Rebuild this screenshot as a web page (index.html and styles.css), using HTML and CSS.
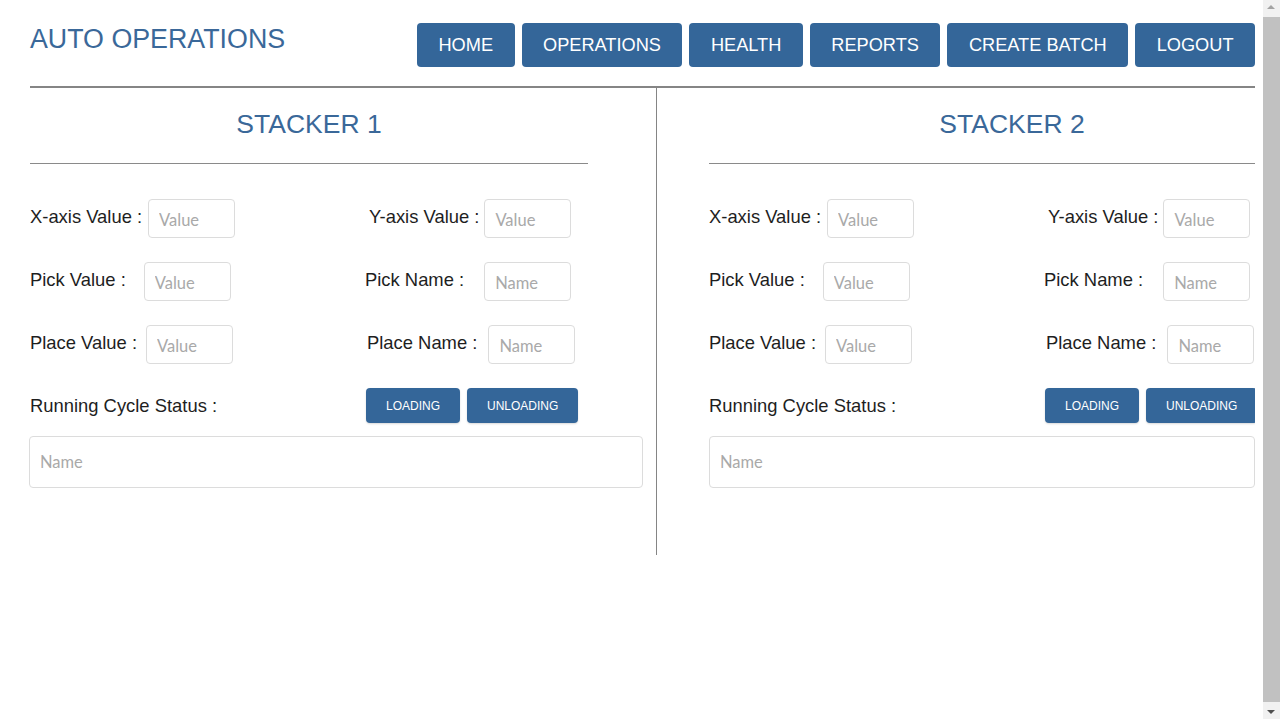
FILE: index.html
```html
<!DOCTYPE html>
<html lang="en">
<head>
<meta charset="utf-8">
<title>Auto Operations</title>
<link rel="stylesheet" href="styles.css">
</head>
<body>
<div class="page">
  <header class="topbar">
    <h1 class="brand">AUTO OPERATIONS</h1>
    <nav class="nav">
      <button class="nav-btn">HOME</button>
      <button class="nav-btn">OPERATIONS</button>
      <button class="nav-btn">HEALTH</button>
      <button class="nav-btn">REPORTS</button>
      <button class="nav-btn">CREATE BATCH</button>
      <button class="nav-btn">LOGOUT</button>
    </nav>
  </header>

  <main class="stackers">
    <section class="stacker stacker-left">
      <h2 class="stacker-title">STACKER 1</h2>
      <div class="form">
        <div class="field-row">
          <div class="field field-left">
            <label class="lbl">X-axis Value :</label>
            <input class="inp gap-s" placeholder="Value">
          </div>
          <div class="field shift-4">
            <label class="lbl">Y-axis Value :</label>
            <input class="inp gap-xs" placeholder="Value">
          </div>
        </div>
        <div class="field-row">
          <div class="field field-left">
            <label class="lbl">Pick Value :</label>
            <input class="inp gap-l" placeholder="Value">
          </div>
          <div class="field">
            <label class="lbl">Pick Name :</label>
            <input class="inp gap-xl" placeholder="Name">
          </div>
        </div>
        <div class="field-row">
          <div class="field field-left">
            <label class="lbl">Place Value :</label>
            <input class="inp gap-m" placeholder="Value">
          </div>
          <div class="field shift-2">
            <label class="lbl">Place Name :</label>
            <input class="inp gap-m2" placeholder="Name">
          </div>
        </div>
        <div class="status-row">
          <span class="lbl status-lbl">Running Cycle Status :</span>
          <div class="status-btns">
            <button class="small-btn">LOADING</button>
            <button class="small-btn">UNLOADING</button>
          </div>
        </div>
        <input class="wide-inp" placeholder="Name">
      </div>
    </section>

    <section class="stacker stacker-right">
      <h2 class="stacker-title title-right">STACKER 2</h2>
      <div class="form">
        <div class="field-row">
          <div class="field field-left">
            <label class="lbl">X-axis Value :</label>
            <input class="inp gap-s" placeholder="Value">
          </div>
          <div class="field shift-4">
            <label class="lbl">Y-axis Value :</label>
            <input class="inp gap-xs" placeholder="Value">
          </div>
        </div>
        <div class="field-row">
          <div class="field field-left">
            <label class="lbl">Pick Value :</label>
            <input class="inp gap-l" placeholder="Value">
          </div>
          <div class="field">
            <label class="lbl">Pick Name :</label>
            <input class="inp gap-xl" placeholder="Name">
          </div>
        </div>
        <div class="field-row">
          <div class="field field-left">
            <label class="lbl">Place Value :</label>
            <input class="inp gap-m" placeholder="Value">
          </div>
          <div class="field shift-2">
            <label class="lbl">Place Name :</label>
            <input class="inp gap-m2" placeholder="Name">
          </div>
        </div>
        <div class="status-row">
          <span class="lbl status-lbl">Running Cycle Status :</span>
          <div class="status-btns">
            <button class="small-btn">LOADING</button>
            <button class="small-btn">UNLOADING</button>
          </div>
        </div>
        <input class="wide-inp wide-right" placeholder="Name">
      </div>
    </section>
  </main>
</div>

<div class="scrollbar" aria-hidden="true">
  <span class="sb-arrow sb-up"></span>
  <span class="sb-thumb"></span>
  <span class="sb-arrow sb-down"></span>
</div>
</body>
</html>
```

FILE: styles.css
```css
body {
  margin: 0;
  font-family: "Liberation Sans", Arial, sans-serif;
  color: #212121;
  background: #fff;
  overflow: hidden;
}
.page {
  width: 1225px;
  margin-left: 30px;
}
.topbar {
  display: flex;
  justify-content: space-between;
  align-items: flex-start;
  padding-top: 21px;
  padding-bottom: 19px;
  border-bottom: 2px solid #858585;
}
.brand {
  margin: 3px 0 0;
  font-weight: normal;
  font-size: 26.8px;
  line-height: 30px;
  color: #3a6899;
}
.nav {
  display: flex;
  gap: 7px;
  margin-top: 2px;
}
.nav-btn {
  height: 44px;
  padding: 0 21.5px;
  border: none;
  border-radius: 4px;
  background: #346699;
  color: #fff;
  font-family: "Liberation Sans", Arial, sans-serif;
  font-size: 18.2px;
  cursor: pointer;
}
.stackers {
  display: flex;
}
.stacker-left {
  width: 626px;
  height: 467px;
  border-right: 1px solid #858585;
  flex: none;
}
.stacker-right {
  width: 546px;
  padding-left: 52px;
  overflow: hidden;
  flex: none;
}
.stacker-title {
  margin: 0;
  width: 558px;
  padding-top: 21px;
  padding-bottom: 24px;
  border-bottom: 1px solid #8a8a8a;
  text-align: center;
  font-weight: normal;
  font-size: 26.5px;
  line-height: 30px;
  color: #3a6899;
}
.title-right {
  width: 486px;
  padding-left: 60px;
}
.form {
  padding-top: 35px;
  width: 700px;
}
.field-row {
  display: flex;
  align-items: center;
  height: 39px;
  margin-bottom: 24px;
}
.field {
  display: flex;
  align-items: center;
}
.field-left {
  width: 335px;
  flex: none;
}
.shift-4 {
  margin-left: 4px;
}
.shift-2 {
  margin-left: 2px;
}
.lbl {
  font-size: 18.4px;
  color: #1e1e1e;
  white-space: nowrap;
}
.field .lbl {
  padding-bottom: 4px;
}
.inp {
  box-sizing: border-box;
  width: 87px;
  height: 39px;
  padding: 2px 10px 0;
  border: 1px solid #dcdcdc;
  border-radius: 4px;
  font-family: Lato, "Open Sans", sans-serif;
  font-size: 16.5px;
  color: #333;
  outline: none;
}
.inp::placeholder,
.wide-inp::placeholder {
  color: #a9a9a9;
}
.gap-xs { margin-left: 5px; }
.gap-s { margin-left: 6px; }
.gap-m { margin-left: 9px; }
.gap-m2 { margin-left: 11px; }
.gap-l { margin-left: 18px; }
.gap-xl { margin-left: 20px; }
.status-row {
  display: flex;
  align-items: center;
  height: 35px;
}
.status-lbl {
  width: 336px;
  flex: none;
}
.status-btns {
  display: flex;
  gap: 7px;
}
.small-btn {
  height: 35px;
  padding: 0 20px;
  border: none;
  border-radius: 4px;
  background: #346699;
  color: #fff;
  font-family: "Liberation Sans", Arial, sans-serif;
  font-size: 12px;
  box-shadow: 0 1px 2px rgba(0,0,0,0.15);
  cursor: pointer;
}
.wide-inp {
  display: block;
  box-sizing: border-box;
  width: 614px;
  height: 52px;
  margin-top: 13px;
  margin-left: -1px;
  padding: 0 10px;
  border: 1px solid #dcdcdc;
  border-radius: 4px;
  font-family: Lato, "Open Sans", sans-serif;
  font-size: 16.5px;
  outline: none;
}
.wide-right {
  width: 546px;
  margin-left: 0;
}

/* fake browser scrollbar */
.scrollbar {
  position: fixed;
  top: 0;
  right: 0;
  bottom: 0;
  width: 17px;
  background: #f1f1f1;
  display: flex;
  flex-direction: column;
  align-items: center;
}
.sb-arrow {
  flex: none;
  height: 17px;
  width: 17px;
  position: relative;
}
.sb-arrow::after {
  content: "";
  position: absolute;
  left: 4px;
  border-left: 4.5px solid transparent;
  border-right: 4.5px solid transparent;
}
.sb-up::after {
  top: 5px;
  border-bottom: 4.5px solid #a3a3a3;
}
.sb-down::after {
  bottom: 5px;
  border-top: 4.5px solid #505050;
}
.sb-thumb {
  flex: 1;
  width: 17px;
  background: #c1c1c1;
}
```
